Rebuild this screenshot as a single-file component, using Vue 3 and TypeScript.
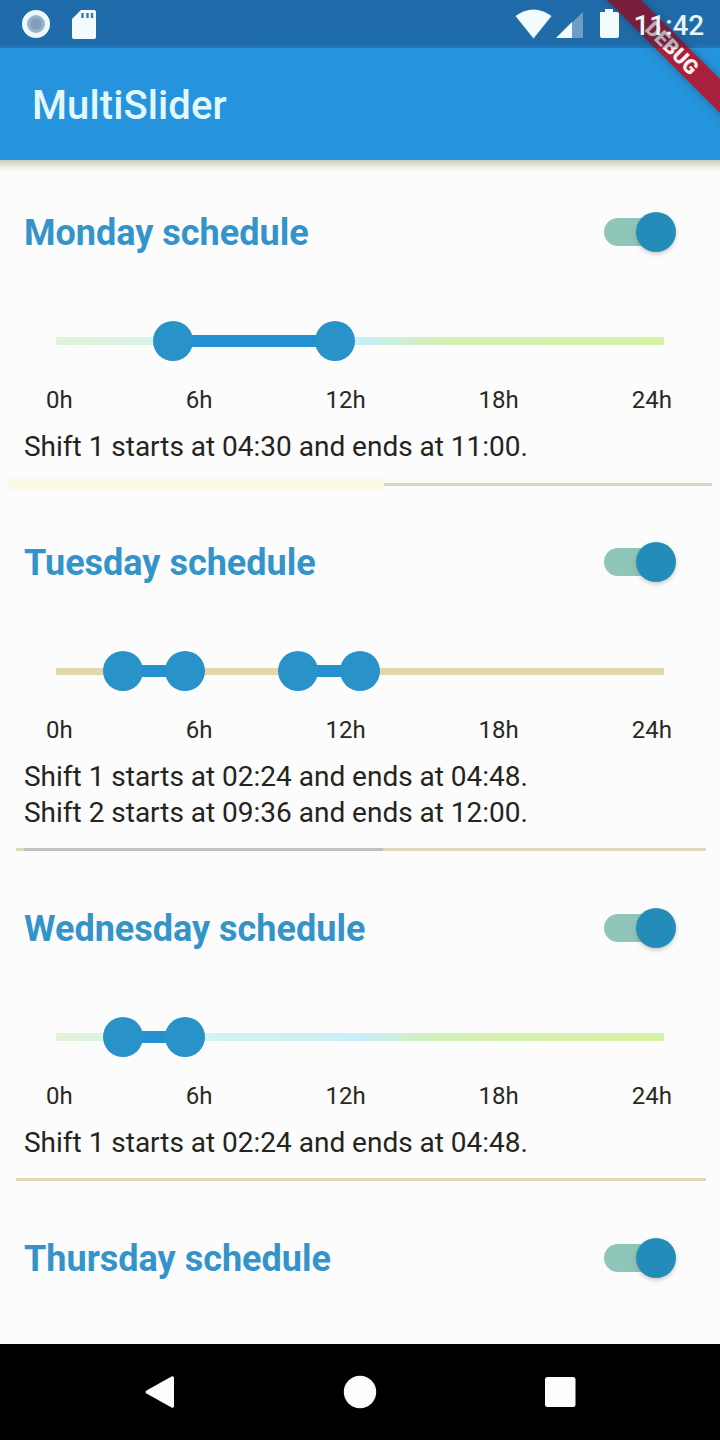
<script setup lang="ts">
interface Shift { start: string; end: string; from: number; to: number }
interface Day { name: string; tone: string; shifts: Shift[] }

// from / to are handle centres, in pixels along the 608px track
const days: Day[] = [
  { name: 'Monday', tone: 'green', shifts: [{ start: '04:30', end: '11:00', from: 116.5, to: 279 }] },
  {
    name: 'Tuesday', tone: 'sand', shifts: [
      { start: '02:24', end: '04:48', from: 67, to: 129 },
      { start: '09:36', end: '12:00', from: 242, to: 304 },
    ],
  },
  { name: 'Wednesday', tone: 'green', shifts: [{ start: '02:24', end: '04:48', from: 67, to: 129 }] },
  { name: 'Thursday', tone: 'green', shifts: [] },
]
const hours = ['0h', '6h', '12h', '18h', '24h']
</script>

<template>
  <div class="screen">
    <header class="top">
      <div class="appbar"><h1>MultiSlider</h1></div>
      <div class="debug">DEBUG</div>
      <div class="status">
        <svg class="left-icons" width="100" height="48" viewBox="0 0 100 48">
          <circle cx="36" cy="24" r="11.5" fill="#9bb3ca" stroke="#eef8fa" stroke-width="5" />
          <circle cx="36" cy="24" r="6" fill="#849fbd" />
          <path d="M81 10H94Q96 10 96 12V37Q96 39 94 39H74Q72 39 72 37V19Z" fill="#f4fbfc" />
          <path d="M82.500 13V18M87.500 13V18M92 13V18" stroke="#3d78ad" stroke-width="2.4" />
        </svg>
        <div class="right">
          <svg width="108" height="48" viewBox="512 0 108 48">
            <path d="M515.500 16Q533.500 3 551.500 16L533.500 38.500Z" fill="#f4fbfc" />
            <path d="M556 38L583 12V38Z" fill="#6f9cc2" />
            <path d="M556 38L572 22V38Z" fill="#f4fbfc" />
            <path d="M600 12H605V9H613V12H617Q619 12 619 14V36Q619 38 617 38H602Q600 38 600 36Z" fill="#f4fbfc" />
          </svg>
          <span class="clock">11:42</span>
        </div>
      </div>
    </header>

    <main class="list">
      <section v-for="day in days" :key="day.name" class="day">
        <div class="head">
          <h2>{{ day.name }} schedule</h2>
          <span class="switch"><i></i></span>
        </div>
        <template v-if="day.shifts.length">
          <div class="slider" :class="day.tone">
            <div class="track"></div>
            <template v-for="s in day.shifts" :key="s.start">
              <div class="range" :style="{ left: s.from + 'px', width: s.to - s.from + 'px' }"></div>
              <div class="thumb" :style="{ left: s.from + 'px' }"></div>
              <div class="thumb" :style="{ left: s.to + 'px' }"></div>
            </template>
          </div>
          <div class="hours"><span v-for="h in hours" :key="h">{{ h }}</span></div>
          <div class="shifts">
            <p v-for="(s, i) in day.shifts" :key="s.start">Shift {{ i + 1 }} starts at {{ s.start }} and ends at {{ s.end }}.</p>
          </div>
        </template>
      </section>
    </main>

    <nav class="nav">
      <svg width="720" height="96" viewBox="0 0 720 96" fill="#fdfdff">
        <path d="M146.500 46.500L171.500 32.500Q174 31.500 174 34V62Q174 64.500 171.500 63.500L146.500 49.500Q144.500 48 146.500 46.500Z" />
        <circle cx="360" cy="48" r="16.200" />
        <rect x="545" y="33" width="30.500" height="30" rx="2.500" />
      </svg>
    </nav>
  </div>
</template>

<style>
body { margin: 0; }
</style>

<style scoped>
.screen {
  width: 720px;
  height: 1440px;
  display: flex;
  flex-direction: column;
  overflow: hidden;
  background: #fcfcfd;
  font-family: Roboto, "Liberation Sans", sans-serif;
}
h1, h2, p { margin: 0; }
.top {
  position: relative;
  z-index: 1;
  flex: none;
  height: 160px;
  overflow: hidden;
  background: #2593de;
}
.screen::before {
  content: "";
  position: absolute;
  top: 160px;
  left: 0;
  width: 720px;
  height: 12px;
  background: linear-gradient(#cbc9bd, #ededdf 55%, #fcfcfd);
}
.appbar { padding: 50px 0 0 32px; height: 110px; display: flex; align-items: center; }
h1 { font-size: 40px; font-weight: 500; color: #e2f8fc; letter-spacing: 0.1px; line-height: 48px; padding-top: 2px; }
.status {
  position: absolute;
  inset: 0 0 auto 0;
  height: 48px;
  display: flex;
  justify-content: space-between;
  background: linear-gradient(rgba(20, 25, 60, 0.32) 90%, rgba(20, 25, 60, 0.22));
}
.right { display: flex; width: 208px; }
.right svg { flex: none; }
.clock { margin-left: 13.5px; font-size: 28px; line-height: 51px; font-weight: 500; color: #e6f5fa; letter-spacing: -0.1px; }
.debug {
  position: absolute;
  left: 572px;
  top: 36px;
  width: 200px;
  height: 24px;
  transform: rotate(45deg);
  background: #a8203a;
  color: #fff3f1;
  font-size: 20.4px;
  font-weight: 900;
  line-height: 24px;
  text-align: center;
  box-shadow: 0 0 10px rgba(20, 90, 110, 0.6);
}
.list { flex: 1; min-height: 0; overflow: hidden; margin-top: -6px; }
.day { padding: 54px 0 18px; position: relative; }
.day:not(:last-child)::after {
  content: "";
  position: absolute;
  left: 16px;
  right: 14px;
  bottom: -1px;
  height: 3px;
  background: #ddd8b8;
}
.day:first-child::after {
  left: 8px;
  right: 8px;
  bottom: -5px;
  height: 10px;
  background:
    linear-gradient(#d9d6bd, #d9d6bd) 376px 4px / 328px 3px no-repeat,
    linear-gradient(#fafae4, #fafae4) 0 0 / 376px 10px no-repeat;
}
.day:nth-child(2)::after { background: linear-gradient(90deg, #ddd8b8 8px, #c3bfc2 8px 367px, #ddd8b8 367px); }
.head { display: flex; justify-content: space-between; align-items: center; height: 48px; padding: 0 44px 0 24px; }
h2 { font-size: 36px; font-weight: 700; line-height: 48px; padding-top: 2px; color: #3494ca; }
.switch { position: relative; width: 72px; height: 40px; display: flex; align-items: center; }
.switch::before { content: ""; width: 66px; height: 28px; border-radius: 14px; background: #90c5b9; }
.switch i {
  position: absolute;
  right: 0;
  top: 0;
  width: 40px;
  height: 40px;
  border-radius: 50%;
  background: #238cb8;
  box-shadow: 0 2px 4px rgba(110, 110, 90, 0.35);
}
.slider { position: relative; height: 40px; margin: 65px 56px 0; display: flex; align-items: center; }
.track { width: 608px; height: 8px; background: #d7f1b0; }
.green .track { background: linear-gradient(90deg, #e2f3d8, #d5f4ed 120px, #c7eff6 310px, #d4efb5 380px, #d6f3a4); }
.sand .track { background: #e1d8ab; height: 7px; }
.range { position: absolute; top: 14px; height: 12px; background: #2490d0; }
.thumb { position: absolute; top: 0; width: 40px; height: 40px; margin-left: -20px; border-radius: 50%; background: #2992c8; }
.hours { display: flex; justify-content: space-between; margin: 25px 48px 0 46px; font-size: 24px; line-height: 28px; color: #292920; }
.shifts { padding: 15px 24px 1px; font-size: 28px; line-height: 36px; letter-spacing: -0.01px; color: #24241c; }
.nav { position: relative; z-index: 1; flex: none; height: 96px; background: #000; }
.nav svg { display: block; }
</style>
